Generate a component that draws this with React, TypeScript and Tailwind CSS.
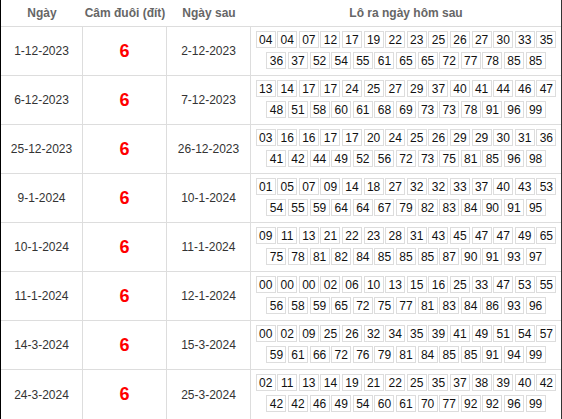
const ROWS: { day: string; next: string; nums: string }[] = [
  { day: '1-12-2023', next: '2-12-2023', nums: '04 04 07 12 17 19 22 23 25 26 27 30 33 35 36 37 52 54 55 61 65 65 72 77 78 85 85' },
  { day: '6-12-2023', next: '7-12-2023', nums: '13 14 17 17 24 25 27 29 37 40 41 44 46 47 48 51 58 60 61 68 69 73 73 78 91 96 99' },
  { day: '25-12-2023', next: '26-12-2023', nums: '03 16 16 17 17 20 24 25 26 29 29 30 31 36 41 42 44 49 52 56 72 73 75 81 85 96 98' },
  { day: '9-1-2024', next: '10-1-2024', nums: '01 05 07 09 14 18 27 32 32 33 37 40 43 53 54 55 59 64 64 67 79 82 83 84 90 91 95' },
  { day: '10-1-2024', next: '11-1-2024', nums: '09 11 13 21 22 23 28 31 43 45 47 47 49 65 75 78 81 82 84 85 85 85 87 90 91 93 97' },
  { day: '11-1-2024', next: '12-1-2024', nums: '00 00 00 02 06 10 13 15 16 25 33 47 53 55 56 58 59 65 72 75 77 81 83 84 86 93 96' },
  { day: '14-3-2024', next: '15-3-2024', nums: '00 02 09 25 26 32 34 35 39 41 49 51 54 57 59 61 66 72 76 79 81 84 85 85 91 94 99' },
  { day: '24-3-2024', next: '25-3-2024', nums: '02 11 13 14 19 21 22 25 35 37 38 39 40 42 42 42 46 49 54 60 61 70 77 92 92 96 99' },
]

export default function App() {
  return (
    <div className="w-[562px] bg-white font-['Liberation_Sans',Arial,sans-serif] text-[12px] text-[#333] border-l border-r border-b border-l-black border-r-[#333] border-b-[#666]">
      {/* header */}
      <div className="grid grid-cols-[82px_84px_84px_1fr] h-[27px] border-b border-[#ddd] font-bold text-[#666]">
        <div className="flex items-center justify-center">Ngày</div>
        <div className="flex items-center justify-center">Câm đuôi (đít)</div>
        <div className="flex items-center justify-center">Ngày sau</div>
        <div className="flex items-center justify-center">Lô ra ngày hôm sau</div>
      </div>

      {ROWS.map((r, i) => (
        <div
          key={i}
          className={`grid grid-cols-[82px_84px_84px_1fr] h-[49px] ${i < ROWS.length - 1 ? 'border-b border-[#ddd]' : ''}`}
        >
          <div className="flex items-center justify-center border-r border-[#ddd]">{r.day}</div>
          <div className="flex items-center justify-center border-r border-[#ddd] text-[18px] font-bold text-[#ff0000]">6</div>
          <div className="flex items-center justify-center border-r border-[#ddd]">{r.next}</div>
          <div className="flex flex-wrap justify-center content-start gap-x-[1.6px] gap-y-[4px] px-[4px] pt-[4px]">
            {r.nums.split(' ').map((n, j) => (
              <span
                key={j}
                className="w-[20px] h-[17px] flex items-center justify-center border border-[#ddd] text-[#111]"
              >
                {n}
              </span>
            ))}
          </div>
        </div>
      ))}
    </div>
  )
}
